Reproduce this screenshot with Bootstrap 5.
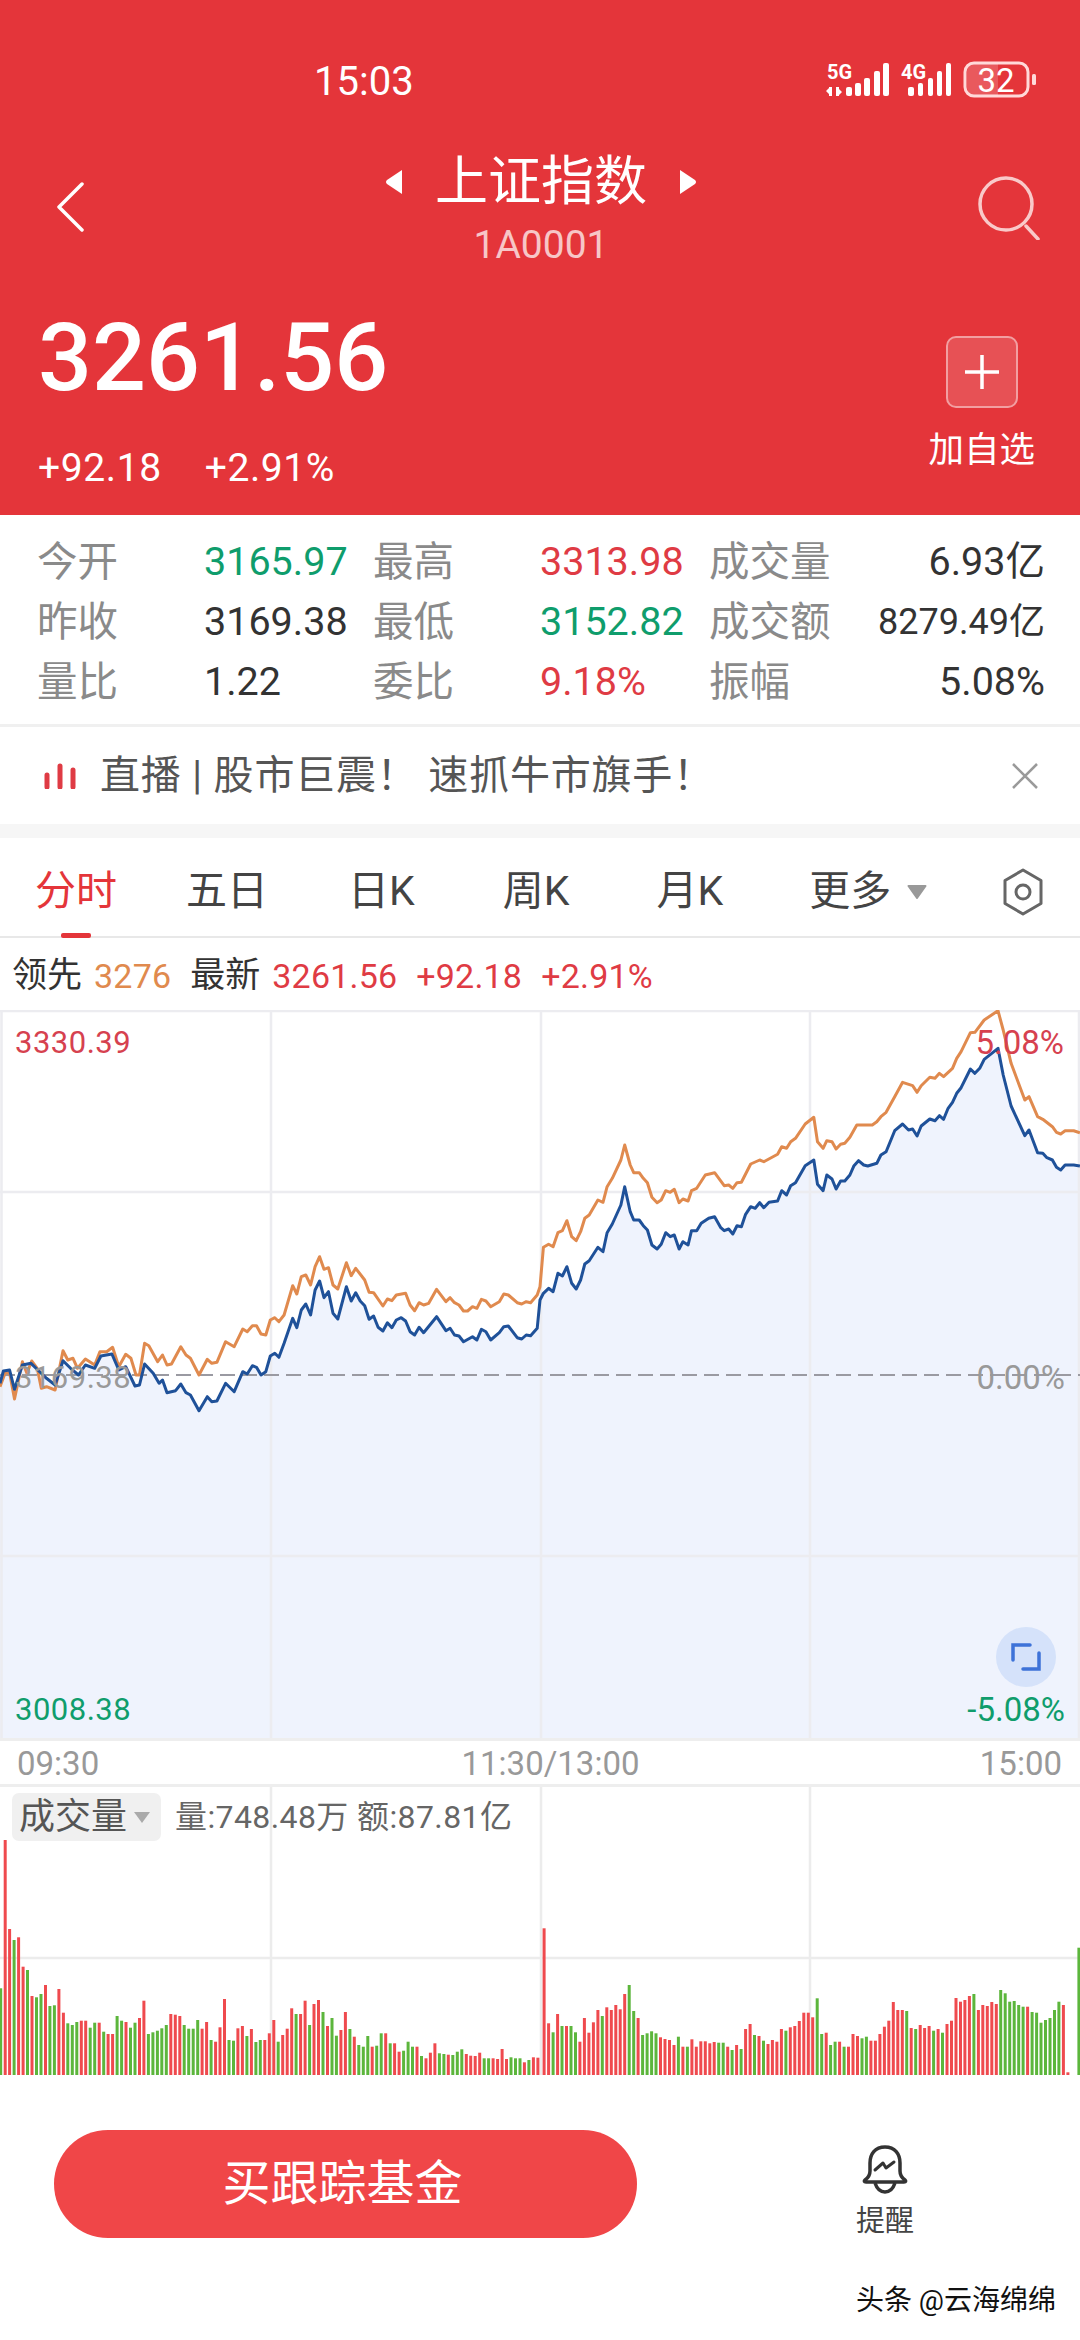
<!DOCTYPE html>
<html lang="zh">
<head>
<meta charset="utf-8">
<title>上证指数</title>
<link rel="stylesheet" href="https://cdn.jsdelivr.net/npm/bootstrap@5.3.0/dist/css/bootstrap.min.css">
<style>
:root{--hq-red:#e4353a;--hq-up:#df3b44;--hq-down:#0f9d6c;}
html,body{margin:0;background:#fff;}
body{width:1080px;height:2340px;overflow:hidden;font-family:Roboto,"Noto Sans CJK SC",sans-serif;color:#333;}
.hq-head{height:515px;background:var(--hq-red);color:#fff;padding:55px 38px 0 38px;}
.hq-status{height:50px;padding-left:276px;}
.hq-time{font-size:40px;line-height:54px;margin-top:4px;}
.hq-sigwrap{margin-right:4px;}
.hq-sig{font-size:20px;font-weight:700;}
.hq-nav{height:153px;margin-top:45px;}
.hq-back{width:42px;padding-left:17px;padding-top:32px;}
.hq-title{font-size:53px;line-height:60px;gap:32px;margin-left:24px;margin-top:2px;}
.hq-sub{font-size:39px;line-height:46px;color:rgba(255,255,255,.72);margin-top:10px;margin-left:24px;}
.hq-tri{width:18px;height:28px;}
.hq-search{margin-top:26px;}
.hq-price{font-size:95px;font-weight:500;line-height:110px;}
.hq-chg{font-size:39px;line-height:46px;margin-top:32px;gap:43px;letter-spacing:.6px;}
.hq-add{width:72px;height:72px;background:rgba(255,255,255,.14);border:2px solid rgba(255,255,255,.45);border-radius:10px;}
.hq-addwrap{margin-right:7px;margin-top:33px;}
.hq-addtxt{font-size:35.500px;line-height:44px;margin-top:20px;}
.hq-stats{height:212px;padding:17px 35px 0 37px;border-bottom:3px solid #f0f0f0;display:grid;grid-template-columns:167px 169px 167px 169px 169px 1fr;grid-auto-rows:60px;font-size:39.500px;line-height:60px;}
.hq-lab{color:#8a8a8a;font-size:40.500px;}
.hq-val{color:#333;}
.hq-up{color:var(--hq-up);}
.hq-down{color:var(--hq-down);}
.hq-stats .hq-small{font-size:36px;}
.hq-banner{height:97px;padding:0 42px 0 44px;font-size:40px;letter-spacing:.8px;color:#555;}
.hq-gap{height:14px;background:#f6f6f6;}
.hq-tabs{height:100px;padding:10px 0 0 35px;border-bottom:2px solid #e8e8e8;font-size:41px;gap:84px;color:#444;position:relative;}
.hq-tab-on{color:var(--hq-red);margin-right:-15px;}
.hq-t3{margin-left:-4px;}
.hq-t4{margin-left:4px;}
.hq-t5{margin-left:3px;}
.hq-t6{margin-left:2px;}
.hq-ind{position:absolute;left:61px;bottom:-2px;width:30px;height:5px;background:var(--hq-red);border-radius:2px;}
.hq-hex{position:absolute;left:1002px;top:30px;}
.hq-info{height:72px;padding:10px 0 0 12px;font-size:35px;line-height:56px;gap:12px;white-space:nowrap;}
.hq-num{font-size:34px;letter-spacing:.2px;}
.hq-or{color:#e08a4e;}
.hq-gapx{margin-left:7px;}
.hq-charts{display:block;}
.hq-axis{height:49px;padding:3px 18px 0 17px;font-size:33px;color:#999;border-top:3px solid #eee;border-bottom:3px solid #eee;}
.hq-axis-mid{margin-left:22px;}
.hq-svgtext{font-family:Roboto,"Noto Sans CJK SC",sans-serif;font-size:31px;letter-spacing:.5px;}
.hq-svgpct{font-family:Roboto,"Noto Sans CJK SC",sans-serif;font-size:33px;}
.hq-volbox{position:relative;height:288px;}
.hq-volhead{position:absolute;left:12px;top:6px;gap:14px;}
.hq-voltag{height:48px;width:149px;background:#f0f0f0;border-radius:7px;font-size:36px;padding-left:7px;color:#555;gap:7px;}
.hq-voltxt{font-size:32px;letter-spacing:.4px;color:#666;}
.hq-foot{height:265px;position:relative;}
.hq-buy{position:absolute;left:54px;top:55px;width:583px;height:108px;background:#f04648;color:#fff;border:0;border-radius:54px;font-size:48px;padding:0 6px 0 0;}
.hq-bell{position:absolute;left:856px;top:70px;width:58px;font-size:29px;line-height:36px;color:#444;text-align:center;}
.hq-belltxt{margin-top:8px;}
.hq-wm{position:absolute;right:24px;top:208px;font-size:28px;line-height:36px;color:#111;}
</style>
</head>
<body>
<header class="hq-head">
  <div class="hq-status d-flex justify-content-between align-items-center">
    <span class="hq-time">15:03</span>
    <svg class="hq-sigwrap" width="212" height="38" viewBox="0 0 212 38" aria-hidden="true">
      <text x="1" y="18" class="hq-sig" fill="#fff">5G</text>
      <g fill="#fff"><path d="M3 26h3v9H3zM10 26h3v9h-3zM0 30l3-3v6zM16 31l-3 3v-6z"/>
      <rect x="20" y="26" width="6" height="9" rx="2"/><rect x="29" y="22" width="6" height="13" rx="2"/><rect x="38" y="17" width="6" height="18" rx="2"/><rect x="48" y="10" width="6" height="25" rx="2"/><rect x="57" y="2" width="6" height="33" rx="2"/></g>
      <text x="75" y="18" class="hq-sig" fill="#fff">4G</text>
      <g fill="#fff"><rect x="82" y="26" width="6" height="9" rx="2"/><rect x="92" y="22" width="5" height="13" rx="2"/><rect x="102" y="17" width="5" height="18" rx="2"/><rect x="111" y="10" width="5" height="25" rx="2"/><rect x="120" y="2" width="5" height="33" rx="2"/></g>
      <rect x="139" y="2" width="63" height="33" rx="9" fill="none" stroke="#ffd9d9" stroke-width="3"/>
      <path d="M141 10a7 7 0 0 1 7-7h24v31h-24a7 7 0 0 1-7-7z" fill="#fff" fill-opacity=".18"/>
      <rect x="206" y="13" width="4" height="11" rx="1.500" fill="#ffd9d9"/>
      <text x="170" y="31" text-anchor="middle" font-size="33" fill="#fff">32</text>
    </svg>
  </div>
  <div class="hq-nav d-flex justify-content-between align-items-start">
    <div class="hq-back"><svg width="30" height="50" viewBox="0 0 30 50" aria-hidden="true"><path d="M27 2 4 25l23 23" fill="none" stroke="#fff" stroke-width="3.500" stroke-linecap="round" stroke-linejoin="round"/></svg></div>
    <div class="text-center">
      <div class="hq-title d-flex align-items-center">
        <svg class="hq-tri" viewBox="0 0 18 28" aria-hidden="true"><path d="M17 2v24L2 16q-2-2 0-4z" fill="#fff"/></svg>
        <span>上证指数</span>
        <svg class="hq-tri" viewBox="0 0 18 28" aria-hidden="true"><path d="M1 2v24l15-10q2-2 0-4z" fill="#fff"/></svg>
      </div>
      <div class="hq-sub">1A0001</div>
    </div>
    <svg class="hq-search" width="64" height="64" viewBox="0 0 64 64" aria-hidden="true"><circle cx="28" cy="28" r="26" fill="none" stroke="#f9c9c9" stroke-width="3.500"/><path d="M48 50l12 13" stroke="#f9c9c9" stroke-width="3.500" stroke-linecap="round"/></svg>
  </div>
  <div class="d-flex justify-content-between align-items-start">
    <div>
      <div class="hq-price">3261.56</div>
      <div class="hq-chg d-flex"><span>+92.18</span><span>+2.91%</span></div>
    </div>
    <div class="hq-addwrap d-flex flex-column align-items-center">
      <div class="hq-add d-flex align-items-center justify-content-center">
        <svg width="36" height="36" viewBox="0 0 36 36" aria-hidden="true"><path d="M18 1v34M1 18h34" stroke="#fff" stroke-width="3.500"/></svg>
      </div>
      <div class="hq-addtxt">加自选</div>
    </div>
  </div>
</header>

<section class="hq-stats">
  <span class="hq-lab">今开</span><span class="hq-down">3165.97</span><span class="hq-lab">最高</span><span class="hq-up">3313.98</span><span class="hq-lab">成交量</span><span class="hq-val text-end">6.93亿</span>
  <span class="hq-lab">昨收</span><span class="hq-val">3169.38</span><span class="hq-lab">最低</span><span class="hq-down">3152.82</span><span class="hq-lab">成交额</span><span class="hq-val text-end hq-small">8279.49亿</span>
  <span class="hq-lab">量比</span><span class="hq-val">1.22</span><span class="hq-lab">委比</span><span class="hq-up">9.18%</span><span class="hq-lab">振幅</span><span class="hq-val text-end">5.08%</span>
</section>

<section class="hq-banner d-flex align-items-center">
  <svg width="32" height="26" viewBox="0 0 32 26" class="me-4" aria-hidden="true"><g stroke="#df3b44" stroke-width="5" stroke-linecap="round"><path d="M3 12v12M16 3v21M29 7v17"/></g></svg>
  <span class="flex-grow-1">直播 | 股市巨震！ 速抓牛市旗手！</span>
  <svg width="26" height="26" viewBox="0 0 26 26" aria-hidden="true"><path d="M1 1l24 24M25 1 1 25" stroke="#9a9a9a" stroke-width="2.500"/></svg>
</section>
<div class="hq-gap"></div>

<nav class="hq-tabs d-flex align-items-center">
  <span class="hq-tab-on">分时</span><span>五日</span><span class="hq-t3">日K</span><span class="hq-t4">周K</span><span class="hq-t5">月K</span>
  <span class="hq-t6 d-flex align-items-center gap-3">更多<svg width="20" height="14" viewBox="0 0 20 14" aria-hidden="true"><path d="M1.500 1h17L10 13z" fill="#999" stroke="#999" stroke-width="2" stroke-linejoin="round"/></svg></span>
  <i class="hq-ind"></i>
  <svg class="hq-hex" width="42" height="48" viewBox="0 0 42 48" aria-hidden="true"><path d="M21 2 39 12.500v23L21 46 3 35.500v-23z" fill="none" stroke="#666" stroke-width="3" stroke-linejoin="round"/><circle cx="21" cy="24" r="7" fill="none" stroke="#666" stroke-width="3"/></svg>
</nav>

<div class="hq-info d-flex">
  <span>领先</span><span class="hq-or hq-num">3276</span><span class="hq-gapx">最新</span><span class="hq-up hq-num">3261.56</span><span class="hq-up hq-num hq-gapx">+92.18</span><span class="hq-up hq-num hq-gapx">+2.91%</span>
</div>

<main>
  <svg id="hqPrice" class="hq-charts" width="1080" height="728" viewBox="0 1010 1080 728">
    <path id="hqArea" fill="#eff3fd"/>
    <g stroke="#ececf0" stroke-width="2.500">
      <path d="M1.500 1010v728M271 1010v728M541 1010v728M810 1010v728M1079 1010v728M0 1011h1080M0 1192h1080M0 1556h1080"/>
    </g>
    <path d="M0 1375h1080" stroke="#9a9aa2" stroke-width="2" stroke-dasharray="15 7"/>
    <polyline id="hqOrange" fill="none" stroke="#e08a4e" stroke-width="3" stroke-linejoin="round"/>
    <polyline id="hqBlue" fill="none" stroke="#1f5199" stroke-width="3" stroke-linejoin="round"/>
    <text class="hq-svgtext" x="15" y="1053" fill="#d6414f">3330.39</text>
    <text class="hq-svgpct" x="1064" y="1054" text-anchor="end" fill="#d6414f">5.08%</text>
    <text class="hq-svgtext" x="15" y="1388" fill="#999">3169.38</text>
    <text class="hq-svgpct" x="1065" y="1389" text-anchor="end" fill="#999">0.00%</text>
    <text class="hq-svgtext" x="15" y="1720" fill="#0f9d6c">3008.38</text>
    <text class="hq-svgpct" x="1065" y="1721" text-anchor="end" fill="#0f9d6c">-5.08%</text>
    <circle cx="1026" cy="1657" r="30" fill="#d5e2fa"/>
    <path d="M1013 1660v-15h17M1039 1653v16h-16" fill="none" stroke="#3d72d8" stroke-width="3.500" stroke-linecap="round"/>
  </svg>
  <div class="hq-axis d-flex justify-content-between align-items-center"><span>09:30</span><span class="hq-axis-mid">11:30/13:00</span><span>15:00</span></div>
  <div class="hq-volbox">
    <svg id="hqVol" class="hq-charts" width="1080" height="288" viewBox="0 1787 1080 288" aria-hidden="true">
      <path d="M271 1787v288M541 1787v288M810 1787v288M0 1958h1080" stroke="#ececec" stroke-width="2.500"/>
      <g id="hqBars"></g>
    </svg>
    <div class="hq-volhead d-flex align-items-center">
      <div class="hq-voltag d-flex align-items-center">成交量<svg width="16" height="11" viewBox="0 0 16 11" aria-hidden="true"><path d="M0 0h16L8 11z" fill="#aaa"/></svg></div>
      <span class="hq-voltxt">量:748.48万 额:87.81亿</span>
    </div>
  </div>
</main>

<footer class="hq-foot">
  <button type="button" class="hq-buy btn">买跟踪基金</button>
  <div class="hq-bell">
    <svg width="46" height="50" viewBox="0 0 46 50" aria-hidden="true"><path d="M23 2C13 2 8 9 8 18v8c0 4-2 7-5 9-1 1-1 2 1 2h38c2 0 2-1 1-2-3-2-5-5-5-9v-8C38 9 33 2 23 2z" fill="none" stroke="#333" stroke-width="3.500" stroke-linejoin="round"/><path d="M13 38c2 6 6 9 10 9s8-3 10-9" fill="none" stroke="#333" stroke-width="3.500"/><path d="M13 25l8-7 3 5 8-6" fill="none" stroke="#333" stroke-width="3" stroke-linejoin="round" stroke-linecap="round"/></svg>
    <div class="hq-belltxt">提醒</div>
  </div>
  <div class="hq-wm">头条 @云海绵绵</div>
</footer>

<script>
var b3="0,1150 10,1113 28,1110 42,1168 65,1095 90,1090 110,1110 135,1135 160,1155 183,1082 205,1105 228,1125 248,1095 275,1105 293,1068 325,1062 345,1110 365,1100 392,1158 405,1155 420,1092 445,1120 462,1150 472,1140 485,1178 510,1172 525,1152 540,1178 553,1185 578,1232 602,1190 615,1205 630,1203 655,1150 680,1175 705,1115 718,1122 733,1097 745,1102 758,1125 772,1115 785,1068 798,1060 810,1072 825,1030 850,955 862,983 875,930 888,912 902,945 915,870 928,843 941,893 954,875 967,940 981,957 1006,860 1020,903 1033,878 1046,903 1059,917 1072,958 1085,948 1098,982 1112,993 1125,968 1138,983 1151,960 1165,953 1178,963 1191,995 1204,1005 1217,982 1230,998 1268,950 1295,992 1307,985 1320,1005 1333,1008 1346,1025 1372,1010 1385,1020 1398,988 1411,995 1425,1020 1450,998 1463,980 1476,978 1502,1013 1515,1017 1528,1005 1541,1007 1560,985";
var b4="0,900 10,880 25,865 38,875 52,820 65,828 78,800 92,850 105,867 118,840 130,792 143,782 168,742 183,755 195,698 210,672 235,615 246,560 262,635 272,660 288,660 300,677 312,690 325,735 340,747 352,733 365,698 378,710 390,705 404,747 415,725 430,735 440,692 455,692 468,670 490,655 507,650 525,683 535,692 548,687 560,702 572,677 585,680 597,643 612,620 625,625 638,608 650,623 665,607 690,603 702,572 716,585 728,557 742,548 770,497 795,480 806,553 822,572 833,525 848,537 860,567 873,543 885,543 900,525 912,497 925,482 940,495 952,498 978,490 990,465 1005,455 1030,392 1053,372 1070,390 1082,387 1095,408 1107,378 1132,357 1147,362 1160,347 1172,358 1185,325 1198,307 1210,280 1223,263 1250,207 1263,220 1277,205 1290,178 1330,145 1345,225 1368,318 1408,407 1420,390 1445,458 1460,460 1472,473 1488,480 1500,502 1512,510 1525,495 1550,495 1568,498";
var o3="0,1160 15,1118 28,1118 42,1197 65,1085 78,1120 92,1083 108,1105 120,1165 135,1160 160,1170 183,1052 197,1080 212,1075 225,1105 248,1077 275,1095 290,1055 310,1055 327,1042 345,1100 365,1063 380,1075 395,1125 405,1125 420,1030 432,1037 458,1085 472,1065 485,1095 498,1092 525,1040 540,1065 553,1075 578,1125 602,1078 615,1090 630,1087 655,1025 680,1040 705,987 718,995 733,977 745,977 758,1002 772,1005 785,960 798,953 810,965 825,945 850,857 862,882 875,830 888,825 902,855 915,800 928,770 941,808 954,803 967,855 981,867 1006,788 1020,827 1033,805 1059,840 1072,877 1085,878 1112,918 1125,897 1138,902 1151,885 1178,880 1191,915 1204,932 1217,908 1230,915 1245,910 1268,868 1295,905 1307,893 1320,908 1333,915 1346,933 1358,933 1372,920 1385,925 1398,898 1411,903 1425,920 1450,905 1463,882 1476,885 1502,908 1515,912 1528,905 1541,908 1560,885";
var o4="0,860 10,742 25,733 38,740 52,698 65,692 78,662 92,710 105,722 118,695 130,655 143,645 168,600 183,607 195,560 210,535 235,480 246,435 262,495 272,518 288,518 300,535 312,548 325,592 340,608 352,600 365,572 378,577 390,568 404,608 415,597 430,603 440,572 455,565 480,525 507,518 535,557 548,555 560,565 572,548 585,547 612,492 638,480 650,485 690,463 702,440 716,445 728,425 742,415 770,372 795,352 806,425 822,445 833,422 848,425 860,447 873,433 885,430 900,412 920,375 965,375 978,365 990,350 1005,337 1030,290 1053,247 1082,257 1095,277 1107,257 1132,232 1147,235 1160,220 1172,230 1198,205 1210,175 1223,155 1250,98 1263,97 1290,60 1330,32 1345,90 1368,190 1408,300 1420,290 1445,350 1460,358 1488,380 1500,397 1512,402 1525,392 1550,392 1568,398";
function pts(s,off){return s.split(" ").map(function(p){var a=p.split(",");return (off+a[0]/2.904).toFixed(1)+","+(1000+a[1]/3).toFixed(1);});}
var bl=pts(b3,0).concat(pts(b4,540)),ol=pts(o3,0).concat(pts(o4,540));
document.getElementById("hqBlue").setAttribute("points",bl.join(" "));
document.getElementById("hqOrange").setAttribute("points",ol.join(" "));
document.getElementById("hqArea").setAttribute("d","M0 1738L"+bl.join("L")+"L1080 1738Z");
var v8="2g625 15r180 28r447 41g480 54r472 67r560 80g570 93r648 106g652 119g642 132r615 145g678 158g676 171r627 184r698 197g730 210g735 223g726 236r722 249r722 262g743 275g728 288r728 301g755 314r762 327r762 340g708 353g722 366r726 379g743 392g728 405r714 418r662 431g762 444g757 457g752 470g745 483g735 496r702 509r704 522r708 535g735 548g746 561g746 574g720 587r746 600r726 613g780 626r785 639r742 652r657 665g780 678g782 691r745 704r738 717g768 730r747 743g786 756g780 769r780 782r760 795r720 808g785 821r765 834r746 847r685 860g702 873r702 886r662 899g735 912r672 925r660 938g696 951r738 964g714 977g767 990r750 1003r696 1016g747 1029r770 1042g795 1055g800 1068g768 1081r800 1094g797 1107g760 1120r760 1133g790 1146r790 1159r815 1172g812 1185g785 1198g800 1211r800 1224g828 1237r835 1250r818 1263r790 1276g820 1289g822 1302r824 1315g825 1328g815 1341g808 1354r822 1367r827 1380r828 1393r818 1406g835 1419g835 1432r835 1445r837 1458r807 1471r837 1484g832 1497g835 1510g835 1523r847 1536g840 1549r832 1562r833";
var v9="12r445 25r730 38g757 51r702 64g738 77r738 90g738 103g757 116r785 129r714 142r758 155r727 168r690 181g708 194r682 207r690 220r675 233r688 246r642 259g615 272g693 285r714 298g765 311g760 324g754 337g760 350r772 363r777 376r780 389r795 402g770 415r800 428g800 441r778 454r800 467r784 480r784 493r790 506r786 519g788 532g788 545r800 558g810 571r795 584g807 597r747 610r732 623g765 636r768 649g782 662r792 675r780 688r785 701r747 714g752 727r742 740r738 753r723 766r698 779r698 792r712 805g655 818g762 831r758 844g795 857g785 870r785 883g800 896r800 909r762 922r768 935g775 948g770 961r782 974r782 987r762 1000r740 1013r722 1026r666 1039r690 1052r690 1065g693 1078r744 1091g747 1104r735 1117r744 1130r738 1143g752 1156r747 1169g758 1182r732 1195r722 1208r654 1221r665 1234r660 1247r648 1260g642 1273r690 1286r675 1299r678 1312r666 1325r672 1338g630 1351g640 1364g665 1377g663 1390g675 1403g680 1416r680 1429g696 1442g698 1455g728 1468g720 1481g714 1494g690 1507g665 1520r675 1533r877 1565g503";
var out="";
function bars(s,off){s.split(" ").forEach(function(t){var m=t.match(/(\d+)([rg])(\d+)/),x=off+m[1]/2.904-1.5,y=1780+m[3]/3;
out+='<rect x="'+x.toFixed(1)+'" y="'+y.toFixed(1)+'" width="3" height="'+(2075-y).toFixed(1)+'" fill="'+(m[2]=="r"?"#ef4a4e":"#5cb63c")+'"/>';});}
bars(v8,0);bars(v9,540);
document.getElementById("hqBars").innerHTML=out;
</script>
</body>
</html>
